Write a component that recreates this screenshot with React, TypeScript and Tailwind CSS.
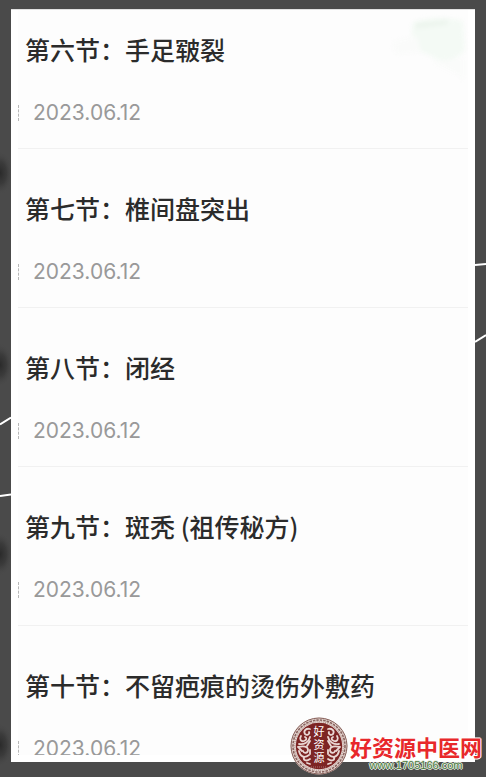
import React from 'react';

const sections = [
    { title: '第六节：手足皲裂', date: '2023.06.12' },
    { title: '第七节：椎间盘突出', date: '2023.06.12' },
    { title: '第八节：闭经', date: '2023.06.12' },
    { title: '第九节：斑秃 (祖传秘方)', date: '2023.06.12' },
    { title: '第十节：不留疤痕的烫伤外敷药', date: '2023.06.12' },
];

const LeftEdge: React.FC = () => (
    <svg className="absolute left-0 top-0" width="11" height="777" viewBox="0 0 11 777" aria-hidden="true">
        <defs>
            <radialGradient id="blot">
                <stop offset="0" stopColor="#2a2a2a" />
                <stop offset="0.5" stopColor="#343434" stopOpacity="0.7" />
                <stop offset="1" stopColor="#4a4a4a" stopOpacity="0" />
            </radialGradient>
        </defs>
        {[173, 365, 554, 745].map((y) => (
            <ellipse key={y} cx="0" cy={y} rx="13" ry="22" fill="url(#blot)" />
        ))}
        <path d="M0 424.5 L11 417.5 M0 496 L11 494.5" stroke="#fff" strokeWidth="2" />
    </svg>
);

const RightEdge: React.FC = () => (
    <svg className="absolute right-0 top-0" width="11" height="777" viewBox="0 0 11 777" aria-hidden="true">
        <path d="M0 265 L11 264 M0 342 L11 335" stroke="#fff" strokeWidth="2" />
    </svg>
);

const GreenPatch: React.FC = () => (
    <svg className="absolute right-1 top-1 blur-[2px]" width="84" height="72" viewBox="0 0 84 72" aria-hidden="true">
        <path d="M26 8 C40 3 62 3 76 7 L78 36 C70 48 52 50 44 42 L30 36 C24 26 24 16 26 8 Z" fill="#f4faf5" />
        <path d="M28 9 L62 5 L60 11 L29 15 Z" fill="#edf5ee" />
        <path d="M6 28 L30 22 L34 38 L8 40 Z M46 48 L76 44 L76 66 L70 60 Z" fill="#fafbfa" />
    </svg>
);

const Seal: React.FC = () => (
    <svg className="shrink-0" width="58" height="58" viewBox="0 0 58 58" role="img" aria-label="好资源">
        <circle cx="29" cy="29" r="28.5" fill="#e6d7d2" />
        <circle cx="29" cy="29" r="28" fill="none" stroke="#86605a" strokeWidth="1" />
        <circle cx="29" cy="29" r="26" fill="none" stroke="#8a6560" strokeWidth="1.6" strokeDasharray="2.5 1" />
        <circle cx="29" cy="29" r="24.3" fill="none" stroke="#9b7771" strokeWidth="0.8" strokeDasharray="1 1" />
        <circle cx="29" cy="29" r="23.2" fill="#7d2524" />
        {['', 'translate(58 0) scale(-1 1)'].map((t) => (
            <g key={t} transform={t} fill="none" stroke="#ead8d4" strokeWidth="1.8" strokeLinecap="round">
                <path d="M20 12 C16 11 13 14 15 17 C17 19 20 17 19 15" />
                <path d="M11 19 C9 22 11 25 14 24 C17 23 17 21 15 20" />
                <path d="M20 20 C19 25 14 28 9 27 M8 30 C13 29 18 29 18 33 C18 36 14 37 13 34" />
                <path d="M9 34 C10 39 14 42 19 38 M20 42 C16 45 13 43 14 40" />
                <path d="M20 24 L17 29 M9 31 L12 34 M20 33 V37 M17 46 L20 47" />
            </g>
        ))}
        <rect x="22" y="6.5" width="14" height="43" fill="#7d2524" />
        <g fill="#fff" fontSize="11" textAnchor="middle" className="font-['Liberation_Serif','Noto_Sans_CJK_SC',serif]">
            <text x="29" y="19">好</text>
            <text x="29" y="32">资</text>
            <text x="29" y="45">源</text>
        </g>
        <path d="M21 50 H37" stroke="#a87570" strokeWidth="1" strokeDasharray="1 1" />
    </svg>
);

const App: React.FC = () => {
    return (
        <div className="relative h-screen flex flex-col bg-[#4a4a4a] px-[11px] pt-[9px] pb-[15px] overflow-hidden font-['Noto_Sans_CJK_SC',sans-serif]">
            <LeftEdge />
            <RightEdge />

            <main className="relative flex-1 min-h-0 flex flex-col bg-white px-[7px] pb-[7px] border-t border-[#e0e0e0]">
                <ul className="flex-1 min-h-0 overflow-hidden bg-[#fdfdfd]">
                    {sections.map((section) => (
                        <li key={section.title} className="pt-[41px] first:pt-[21px] pb-5 border-b border-[#f1f1f1]">
                            <h2 className="pl-[7px] text-[25px] leading-[36px] font-medium text-[#2b2b2b] whitespace-nowrap">{section.title}</h2>
                            <div className="flex items-center gap-[14px] mt-[31px]">
                                <span className="w-px h-4 border-l border-dashed border-[#b8b8b8]"></span>
                                <time className="text-[21px] leading-[30px] text-[#999] font-['Inter',sans-serif]">{section.date}</time>
                            </div>
                        </li>
                    ))}
                </ul>
                <GreenPatch />
            </main>

            <div className="absolute right-1 bottom-[2px] flex items-center gap-[2px]">
                <Seal />
                <div className="flex flex-col items-center pt-3">
                    <p className="text-[22px] leading-[26px] font-bold text-[#e8282b] [text-shadow:1px_0_#fff,-1px_0_#fff,0_1px_#fff,0_-1px_#fff] whitespace-nowrap">好资源中医网</p>
                    <a
                        href="#"
                        className="text-[11px] leading-[12px] text-[#4d7a43] [text-shadow:1px_0_#e6efe2,-1px_0_#e6efe2,0_1px_#e6efe2,0_-1px_#e6efe2] font-['Liberation_Sans',sans-serif]"
                    >
                        www.1705166.com
                    </a>
                </div>
            </div>
        </div>
    );
};

export default App;
